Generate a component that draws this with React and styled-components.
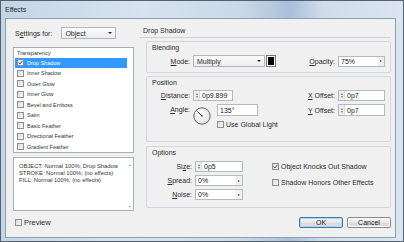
import styled, { createGlobalStyle } from "styled-components";

const Global = createGlobalStyle`
  html, body { margin: 0; padding: 0; background: #fff; }
  body { font-family: "Liberation Sans", Arial, sans-serif; }
`;

const Window = styled.div`
  width: 404px;
  height: 242px;
  box-sizing: border-box;
  border: 1px solid #56616e;
  background: linear-gradient(90deg, #c5d5e6 0%, #d7e3ef 35%, #c9d8e8 60%, #a9c0da 72%, #cfdcea 80%, #dae5f0 100%);
  display: flex;
  flex-direction: column;
  padding: 0 7px 3px 4px;
`;

const TitleBar = styled.div`
  height: 17px;
  display: flex;
  align-items: center;
  padding-left: 0;
  font-size: 7px;
  color: #1c1c1c;
`;

const Body = styled.div`
  flex: 1;
  display: flex;
  background: #f0f0f0;
  border: 1px solid #8d9fb5;
  color: #2b2b2b;
  font-size: 7px;
`;

const LeftPane = styled.div`
  width: 134px;
  box-sizing: border-box;
  padding: 8px 6px 0 7px;
  display: flex;
  flex-direction: column;
`;

const SettingsRow = styled.div`
  height: 12px;
  display: flex;
  align-items: center;
  padding-left: 2px;
  gap: 9px;
`;

const Select = styled.div`
  width: ${(p) => p.$w}px;
  height: 12px;
  box-sizing: border-box;
  border: 1px solid #b3b7bd;
  background: linear-gradient(#fbfbfb, #ececec);
  display: flex;
  align-items: center;
  padding: 0 3px 0 3px;
  justify-content: space-between;
  &::after {
    content: "";
    border-left: 2px solid transparent;
    border-right: 2px solid transparent;
    border-top: 2.5px solid #222;
  }
`;

const ListBox = styled.div`
  margin-top: 8px;
  height: 106px;
  box-sizing: border-box;
  border: 1px solid #a9adb4;
  background: #fff;
  padding: 0 6px 0 1px;
  font-size: 5.5px;
`;

const ListHeader = styled.div`
  height: 9.5px;
  display: flex;
  align-items: center;
  padding-left: 2px;
  color: #333;
`;

const ListRow = styled.div`
  height: 10.5px;
  display: flex;
  align-items: center;
  gap: 3px;
  padding-left: 2px;
  background: ${(p) => (p.$sel ? "#3399ff" : "transparent")};
  color: ${(p) => (p.$sel ? "#fff" : "#333")};
`;

const Box = styled.span`
  width: 7px;
  height: 7px;
  box-sizing: border-box;
  border: 1px solid #8e8f8f;
  background: linear-gradient(135deg, #dcdcdc, #f8f8f8);
  display: inline-flex;
  align-items: center;
  justify-content: center;
  flex-shrink: 0;
`;

const DescBox = styled.div`
  margin-top: 4px;
  height: 54px;
  box-sizing: border-box;
  border: 1px solid #a9adb4;
  background: #fff;
  display: flex;
  font-size: 5.8px;
  color: #333;
`;

const DescText = styled.div`
  flex: 1;
  padding: 5px 0 0 5px;
  line-height: 7px;
  white-space: nowrap;
`;

const ScrollCol = styled.div`
  width: 7px;
  display: flex;
  flex-direction: column;
  justify-content: space-between;
  align-items: center;
  padding: 6px 0 2px;
  &::before, &::after {
    content: "";
    border-left: 1.5px solid transparent;
    border-right: 1.5px solid transparent;
  }
  &::before { border-bottom: 2px solid #999; }
  &::after { border-top: 2px solid #999; }
`;

const PreviewRow = styled.div`
  margin-top: 7px;
  height: 9px;
  display: flex;
  align-items: center;
  gap: 2px;
  padding-left: 2px;
  font-size: 7.5px;
`;

const RightPane = styled.div`
  flex: 1;
  display: flex;
  flex-direction: column;
  padding-right: 4px;
`;

const Heading = styled.div`
  height: 19px;
  box-sizing: border-box;
  display: flex;
  align-items: flex-end;
  padding: 0 0 2px 3px;
  line-height: 8px;
  border-bottom: 1px solid #cfd3d8;
`;

const Group = styled.div`
  margin: ${(p) => p.$mt}px 0 0 6px;
  height: ${(p) => p.$h}px;
  box-sizing: border-box;
  border: 1px solid #d3d7dc;
  border-radius: 2px;
  padding: 2px 0 0 5px;
  display: flex;
  flex-direction: column;
`;

const GroupTitle = styled.div`
  line-height: 8px;
  height: 8px;
`;

const Columns = styled.div`
  display: flex;
  margin-top: ${(p) => p.$mt}px;
`;

const Col = styled.div`
  display: flex;
  flex-direction: column;
  gap: ${(p) => p.$gap || 0}px;
  width: ${(p) => (p.$w ? `${p.$w}px` : "auto")};
`;

const FieldRow = styled.div`
  display: flex;
  align-items: ${(p) => p.$align || "center"};
  height: ${(p) => (p.$h ? `${p.$h}px` : "auto")};
`;

const Label = styled.span`
  width: ${(p) => p.$w}px;
  text-align: right;
  margin-right: 3px;
  flex-shrink: 0;
  margin-top: ${(p) => p.$mt || 0}px;
`;

const Field = styled.div`
  width: ${(p) => p.$w}px;
  height: ${(p) => p.$h || 11}px;
  box-sizing: border-box;
  border: 1px solid #b5b9c0;
  background: #fff;
  display: flex;
  align-items: center;
  color: #222;
`;

const FieldText = styled.span`
  flex: 1;
  padding-left: 2px;
`;

const Spin = styled.span`
  width: 5px;
  align-self: stretch;
  display: flex;
  flex-direction: column;
  justify-content: center;
  align-items: center;
  gap: 1px;
  background: #eeeeee;
  border-right: 1px solid #dadada;
  &::before, &::after {
    content: "";
    border-left: 1.5px solid transparent;
    border-right: 1.5px solid transparent;
  }
  &::before { border-bottom: 2px solid #777; }
  &::after { border-top: 2px solid #777; }
`;

const Pop = styled.span`
  width: 7px;
  align-self: stretch;
  display: flex;
  align-items: center;
  justify-content: center;
  background: #f0f0f0;
  &::after {
    content: "";
    border-top: 1.5px solid transparent;
    border-bottom: 1.5px solid transparent;
    border-left: 2px solid #444;
  }
`;

const Swatch = styled.span`
  width: 10px;
  height: 12px;
  box-sizing: border-box;
  margin-left: 1px;
  border: 1px solid #777;
  background: #000;
  box-shadow: inset 0 0 0 1px #fff;
`;

const CheckLine = styled.label`
  display: flex;
  align-items: center;
  gap: 2px;
  height: 9px;
  margin-top: ${(p) => p.$mt || 0}px;
`;

const Buttons = styled.div`
  margin-top: 9px;
  display: flex;
  justify-content: flex-end;
  gap: 4px;
`;

const Button = styled.button`
  width: 44px;
  height: 11px;
  padding: 0;
  font-family: inherit;
  font-size: 7px;
  color: #222;
  border-radius: 2px;
  border: 1px solid ${(p) => (p.$primary ? "#3d7bad" : "#8a8a8a")};
  background: linear-gradient(#f6f6f6 0%, #e8e8e8 50%, #d8d8d8 51%, #e2e2e2 100%);
  box-shadow: ${(p) => (p.$primary ? "inset 0 0 0 1px #a8d8f0" : "inset 0 0 0 1px #fcfcfc")};
`;

const Check = () => (
  <svg width="5" height="5" viewBox="0 0 5 5">
    <path d="M0.6 2.6 L2 4 L4.4 0.8" fill="none" stroke="#2b4a7a" strokeWidth="0.9" />
  </svg>
);

const Dial = () => (
  <svg width="18" height="18" viewBox="0 0 18 18" style={{ flexShrink: 0 }}>
    <defs>
      <radialGradient id="dg" cx="40%" cy="35%" r="70%">
        <stop offset="0" stopColor="#ffffff" />
        <stop offset="1" stopColor="#e2e2e2" />
      </radialGradient>
    </defs>
    <circle cx="9" cy="9" r="8.2" fill="url(#dg)" stroke="#555" strokeWidth="0.9" />
    <line x1="9" y1="9" x2="4.3" y2="4.3" stroke="#333" strokeWidth="0.9" />
    <circle cx="9" cy="9" r="0.8" fill="#333" />
  </svg>
);

const effects = [
  "Drop Shadow",
  "Inner Shadow",
  "Outer Glow",
  "Inner Glow",
  "Bevel and Emboss",
  "Satin",
  "Basic Feather",
  "Directional Feather",
  "Gradient Feather",
];

const App = () => {
  return (
    <>
      <Global />
      <Window>
        <TitleBar>Effects</TitleBar>
        <Body>
          <LeftPane>
            <SettingsRow>
              <span>S<u>e</u>ttings for:</span>
              <Select $w={55}>Object</Select>
            </SettingsRow>
            <ListBox>
              <ListHeader>Transparency</ListHeader>
              {effects.map((name, i) => (
                <ListRow key={name} $sel={i === 0}>
                  <Box>{i === 0 && <Check />}</Box>
                  {name}
                </ListRow>
              ))}
            </ListBox>
            <DescBox>
              <DescText>
                OBJECT: Normal 100%; Drop Shadow
                <br />
                STROKE: Normal 100%; (no effects)
                <br />
                FILL: Normal 100%; (no effects)
              </DescText>
              <ScrollCol />
            </DescBox>
            <PreviewRow>
              <Box />
              Preview
            </PreviewRow>
          </LeftPane>

          <RightPane>
            <Heading>Drop Shadow</Heading>

            <Group $mt={3} $h={32}>
              <GroupTitle>Blending</GroupTitle>
              <Columns $mt={3}>
                <FieldRow>
                  <Label $w={38}><u>M</u>ode:</Label>
                  <Select $w={72}>Multiply</Select>
                  <Swatch />
                </FieldRow>
                <FieldRow style={{ marginLeft: 31 }}>
                  <Label $w={28}><u>O</u>pacity:</Label>
                  <Field $w={47}>
                    <FieldText>75%</FieldText>
                    <Pop />
                  </Field>
                </FieldRow>
              </Columns>
            </Group>

            <Group $mt={3} $h={66}>
              <GroupTitle>Position</GroupTitle>
              <Columns $mt={3}>
                <Col $w={153} $gap={3}>
                  <FieldRow>
                    <Label $w={38}><u>D</u>istance:</Label>
                    <Field $w={40}>
                      <Spin />
                      <FieldText>0p9.899</FieldText>
                    </Field>
                  </FieldRow>
                  <FieldRow $align="flex-start">
                    <Label $w={38} $mt={2}><u>A</u>ngle:</Label>
                    <span style={{ marginTop: 3 }}><Dial /></span>
                    <Col style={{ marginLeft: 6 }}>
                      <Field $w={41} $h={12}>
                        <FieldText>135°</FieldText>
                      </Field>
                      <CheckLine $mt={4}>
                        <Box />
                        Use Global Light
                      </CheckLine>
                    </Col>
                  </FieldRow>
                </Col>
                <Col $gap={3}>
                  <FieldRow>
                    <Label $w={30}><u>X</u> Offset:</Label>
                    <Field $w={47}>
                      <Spin />
                      <FieldText>0p7</FieldText>
                    </Field>
                  </FieldRow>
                  <FieldRow>
                    <Label $w={30}><u>Y</u> Offset:</Label>
                    <Field $w={47} $h={12}>
                      <Spin />
                      <FieldText>0p7</FieldText>
                    </Field>
                  </FieldRow>
                </Col>
              </Columns>
            </Group>

            <Group $mt={4} $h={62}>
              <GroupTitle>Options</GroupTitle>
              <Columns $mt={4}>
                <Col $w={120} $gap={3}>
                  <FieldRow>
                    <Label $w={40}>Si<u>z</u>e:</Label>
                    <Field $w={48}>
                      <Spin />
                      <FieldText>0p5</FieldText>
                    </Field>
                  </FieldRow>
                  <FieldRow>
                    <Label $w={40}><u>S</u>pread:</Label>
                    <Field $w={48}>
                      <FieldText>0%</FieldText>
                      <Pop />
                    </Field>
                  </FieldRow>
                  <FieldRow>
                    <Label $w={40}><u>N</u>oise:</Label>
                    <Field $w={48}>
                      <FieldText>0%</FieldText>
                      <Pop />
                    </Field>
                  </FieldRow>
                </Col>
                <Col>
                  <CheckLine $mt={1}>
                    <Box><Check /></Box>
                    Object Knocks Out Shadow
                  </CheckLine>
                  <CheckLine $mt={7}>
                    <Box />
                    Shadow Honors Other Effects
                  </CheckLine>
                </Col>
              </Columns>
            </Group>

            <Buttons>
              <Button $primary>OK</Button>
              <Button>Cancel</Button>
            </Buttons>
          </RightPane>
        </Body>
      </Window>
    </>
  );
};

export default App;
